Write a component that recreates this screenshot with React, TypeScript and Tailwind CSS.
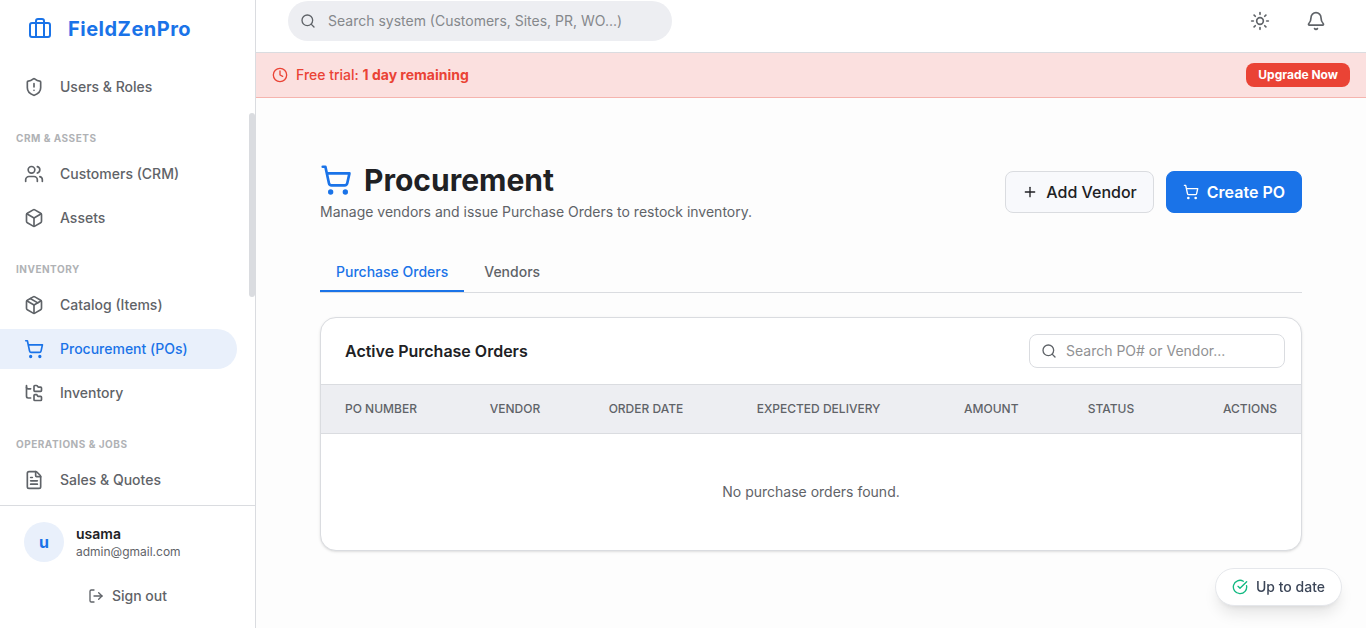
import { useState } from "react";
import {
  Bell,
  Box,
  Briefcase,
  CircleCheckBig,
  Clock,
  FileText,
  FolderTree,
  LogOut,
  Package,
  Plus,
  Search,
  ShieldAlert,
  ShoppingCart,
  Sun,
  Users,
  type LucideIcon,
} from "lucide-react";

type NavItem = { label: string; icon: LucideIcon };
type NavSection = { title?: string; items: NavItem[] };

const NAV: NavSection[] = [
  { items: [{ label: "Users & Roles", icon: ShieldAlert }] },
  {
    title: "CRM & Assets",
    items: [
      { label: "Customers (CRM)", icon: Users },
      { label: "Assets", icon: Box },
    ],
  },
  {
    title: "Inventory",
    items: [
      { label: "Catalog (Items)", icon: Package },
      { label: "Procurement (POs)", icon: ShoppingCart },
      { label: "Inventory", icon: FolderTree },
    ],
  },
  {
    title: "Operations & Jobs",
    items: [{ label: "Sales & Quotes", icon: FileText }],
  },
];

const TABS = ["Purchase Orders", "Vendors"];

const COLUMNS = [
  { label: "PO Number", align: "text-left" },
  { label: "Vendor", align: "text-left" },
  { label: "Order Date", align: "text-left" },
  { label: "Expected Delivery", align: "text-left" },
  { label: "Amount", align: "text-left" },
  { label: "Status", align: "text-left" },
  { label: "Actions", align: "text-right" },
];

function Sidebar() {
  const [active, setActive] = useState("Procurement (POs)");

  return (
    <aside className="flex w-64 shrink-0 flex-col border-r border-[#dadce0] bg-white">
      <div className="flex h-[58px] shrink-0 items-center gap-4 px-7">
        <Briefcase className="size-6 text-[#1a73e8]" />
        <span className="text-xl font-bold tracking-wide text-[#1a73e8]">FieldZenPro</span>
      </div>

      <nav className="relative min-h-0 flex-1 overflow-hidden pt-[9px]">
        {NAV.map((section, i) => (
          <div key={i} className="mb-6">
            {section.title && (
              <h2 className="mb-2 px-4 text-[10px] leading-[15px] font-bold tracking-wider text-[#b0b2b5] uppercase">
                {section.title}
              </h2>
            )}
            <ul className="flex flex-col gap-1">
              {section.items.map(({ label, icon: Icon }) => (
                <li key={label} className="pr-[18px]">
                  <a
                    href="#"
                    onClick={() => setActive(label)}
                    className={`flex h-10 items-center gap-4 rounded-r-full pl-6 text-sm font-medium ${
                      label === active
                        ? "bg-[#e9f0fb] text-[#1a73e8]"
                        : "text-[#5f6368] hover:bg-gray-100"
                    }`}
                  >
                    <Icon className="size-5" />
                    {label}
                  </a>
                </li>
              ))}
            </ul>
          </div>
        ))}
        <div className="absolute top-[55px] right-0 h-[184px] w-1.5 rounded-full bg-[#dadce0]" />
      </nav>

      <div className="shrink-0 border-t border-[#dadce0] px-4 pt-4 pb-3.5">
        <div className="flex items-center gap-3 px-2">
          <div className="flex size-10 items-center justify-center rounded-full bg-[#e9f0fb] font-bold text-[#1a73e8]">
            u
          </div>
          <div>
            <p className="text-sm font-semibold text-[#202124]">usama</p>
            <p className="text-xs text-[#5f6368]">admin@gmail.com</p>
          </div>
        </div>
        <button className="mt-4 flex h-9 w-full items-center justify-center gap-2 text-sm font-medium text-[#5f6368]">
          <LogOut className="size-4" />
          Sign out
        </button>
      </div>
    </aside>
  );
}

function TopBar() {
  return (
    <header className="flex h-[53px] shrink-0 items-start justify-between border-b border-[#dadce0] bg-white pt-px pr-[30px] pl-8">
      <label className="flex h-10 w-96 items-center gap-3 rounded-full bg-[#edeef2] px-3">
        <Search className="size-4 text-[#5f6368]" />
        <input
          type="text"
          aria-label="Search system"
          placeholder="Search system (Customers, Sites, PR, WO...)"
          className="min-w-0 flex-1 bg-transparent text-sm outline-none placeholder:text-[#85888c]"
        />
      </label>
      <div className="flex gap-4 text-[#5f6368]">
        <button aria-label="Toggle theme" className="flex size-10 items-center justify-center">
          <Sun className="size-5" />
        </button>
        <button aria-label="Notifications" className="flex size-10 items-center justify-center">
          <Bell className="size-5" />
        </button>
      </div>
    </header>
  );
}

function TrialBanner() {
  return (
    <div className="flex h-[45px] shrink-0 items-center justify-between border-b border-[#f5b4ae] bg-[#fbe0df] px-4">
      <p className="flex items-center gap-2 text-sm font-medium text-[#ea4335]">
        <Clock className="size-4" />
        <span>
          Free trial: <b className="font-bold">1 day remaining</b>
        </span>
      </p>
      <button className="h-6 rounded-lg bg-[#ea4335] px-3 text-xs font-bold text-white">
        Upgrade Now
      </button>
    </div>
  );
}

function OrdersCard() {
  return (
    <section className="mt-6 overflow-hidden rounded-2xl border border-[#dadce0] bg-white shadow-sm">
      <div className="flex items-center justify-between py-4 pr-4 pl-6">
        <h2 className="text-base font-semibold text-[#202124]">Active Purchase Orders</h2>
        <label className="flex h-[34px] w-64 items-center gap-[9px] rounded-lg border border-[#dadce0] px-[11px]">
          <Search className="size-4 text-[#5f6368]" />
          <input
            type="text"
            aria-label="Search purchase orders"
            placeholder="Search PO# or Vendor..."
            className="min-w-0 flex-1 bg-transparent text-sm outline-none placeholder:text-[#909193]"
          />
        </label>
      </div>
      <table className="w-full text-sm text-[#5f6368]">
        <thead className="border-y border-[#dadce0] bg-[#edeef2] text-xs uppercase">
          <tr>
            {COLUMNS.map((c) => (
              <th key={c.label} className={`px-6 py-4 font-medium ${c.align}`}>
                {c.label}
              </th>
            ))}
          </tr>
        </thead>
        <tbody>
          <tr>
            <td colSpan={COLUMNS.length} className="px-6 py-12 text-center">
              No purchase orders found.
            </td>
          </tr>
        </tbody>
      </table>
    </section>
  );
}

export default function App() {
  const [tab, setTab] = useState(TABS[0]);

  return (
    <div className="flex h-screen overflow-hidden bg-[#fdfdfd] font-['Inter',sans-serif] text-[#202124]">
      <Sidebar />
      <div className="flex min-w-0 flex-1 flex-col">
        <TopBar />
        <TrialBanner />
        <main className="min-h-0 flex-1 overflow-hidden px-16 pt-16">
          <div className="flex items-center justify-between">
            <div>
              <h1 className="flex items-center gap-3 text-3xl font-bold">
                <ShoppingCart className="size-8 text-[#1a73e8]" />
                Procurement
              </h1>
              <p className="mt-1 text-sm text-[#5f6368]">
                Manage vendors and issue Purchase Orders to restock inventory.
              </p>
            </div>
            <div className="flex gap-3">
              <button className="flex h-[42px] items-center gap-2 rounded-lg border border-[#dadce0] bg-[#f8f9fc] px-4 font-medium">
                <Plus className="size-4" />
                Add Vendor
              </button>
              <button className="flex h-[42px] items-center gap-2 rounded-lg border border-[#1a73e8] bg-[#1a73e8] px-4 font-semibold text-white">
                <ShoppingCart className="size-4" />
                Create PO
              </button>
            </div>
          </div>

          <div role="tablist" className="mt-8 flex gap-1 border-b border-[#dadce0]">
            {TABS.map((t) => (
              <button
                key={t}
                role="tab"
                aria-selected={t === tab}
                onClick={() => setTab(t)}
                className={`h-[38px] border-b-2 px-4 text-sm font-medium ${
                  t === tab
                    ? "border-[#1a73e8] text-[#1a73e8]"
                    : "border-transparent text-[#5f6368]"
                }`}
              >
                {t}
              </button>
            ))}
          </div>

          <OrdersCard />
        </main>
      </div>

      <div
        role="status"
        className="fixed right-6 bottom-[22px] flex items-center gap-2 rounded-full border border-gray-200 bg-white px-4 py-2 text-sm font-medium text-[#3c4658] shadow-lg"
      >
        <CircleCheckBig className="size-4 text-[#10b981]" />
        Up to date
      </div>
    </div>
  );
}
